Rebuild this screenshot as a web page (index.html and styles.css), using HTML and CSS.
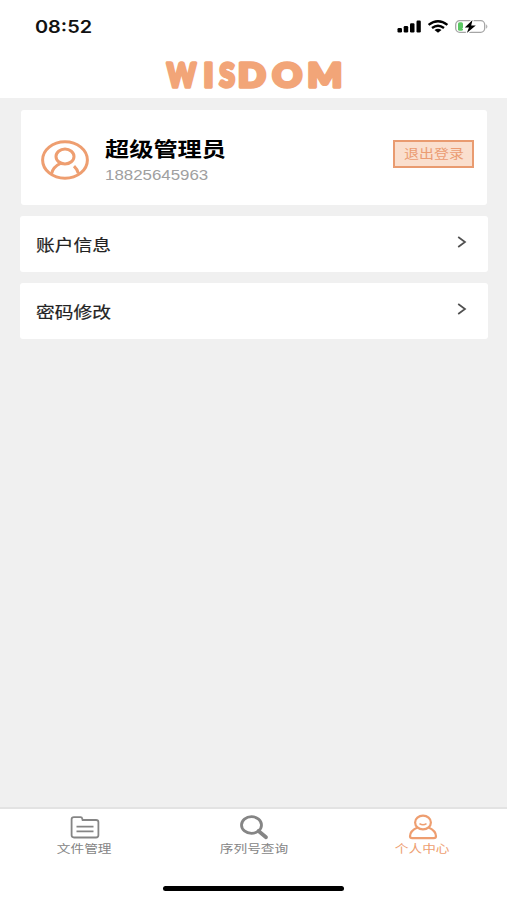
FILE: index.html
```html
<!DOCTYPE html>
<html lang="zh-CN">
<head>
<meta charset="utf-8">
<title>个人中心</title>
<link rel="stylesheet" href="styles.css">
</head>
<body>
<div class="app">
  <header class="header">
    <div class="status">
      <span class="time wide">08:52</span>
      <svg class="signals" width="92" height="16" viewBox="0 0 92 16">
        <g fill="#000">
          <rect x="0.5" y="9" width="4.5" height="4.5" rx="1.2"/>
          <rect x="6.7" y="7" width="4.5" height="6.5" rx="1.2"/>
          <rect x="13" y="4.2" width="4.5" height="9.3" rx="1.2"/>
          <rect x="19.5" y="1.5" width="4.3" height="12" rx="1.2"/>
        </g>
        <g fill="none" stroke="#000" stroke-width="2.4">
          <path d="M31.6 5.9Q41 -1.3 50.4 5.9"/>
          <path d="M35 9Q41 4.4 47 9"/>
        </g>
        <path d="M37.5 11Q41 8.5 44.5 11L41 13.8Z" fill="#000"/>
        <rect x="58.7" y="1.7" width="29" height="11.6" rx="4" fill="none" stroke="#a5a5a5" stroke-width="1.3"/>
        <path d="M89.2 5.2Q91.6 7.5 89.2 9.8Z" fill="#a5a5a5"/>
        <rect x="61" y="3.2" width="5" height="8.6" rx="1.6" fill="#5ac763"/>
        <path d="M75.5 1L67.8 8.5H72L69.8 14L78.8 6.4H74.2Z" fill="#000" stroke="#fff" stroke-width="2.4" paint-order="stroke"/>
      </svg>
    </div>
    <svg class="logo" width="190" height="46" viewBox="0 0 190 46">
      <text transform="translate(8 34.5) scale(.83 1)">W</text>
      <text transform="translate(44.5 34.5)">I</text>
      <text transform="translate(60.5 34.5) scale(.84 1)">S</text>
      <text transform="translate(79 34.5) scale(1.1 1)">D</text>
      <text transform="translate(113.5 34.5) scale(1.1 1)">O</text>
      <text transform="translate(148.5 34.5) scale(1.1 1)">M</text>
    </svg>
  </header>
  <main class="content">
    <section class="card profile">
      <svg class="avatar" width="48" height="40" viewBox="0 0 48 40" fill="none" stroke="#ee9e70" stroke-width="3">
        <ellipse cx="24" cy="20" rx="22.4" ry="18.3"/>
        <ellipse cx="24" cy="16.5" rx="9" ry="7.4" />
        <path d="M10.5 34C11.5 28 15.5 25.3 19.5 23.4M33 26.2Q36.5 29.5 37.4 33.5"/>
      </svg>
      <div class="who">
        <div class="name wide">超级管理员</div>
        <div class="phone wide">18825645963</div>
      </div>
      <button class="logout"><span class="wide">退出登录</span></button>
    </section>
    <a class="card row"><span class="wide">账户信息</span>
      <svg class="arrow" width="10" height="12" viewBox="0 0 10 12"><path d="M1.2 1L8 6L1.2 11"/></svg></a>
    <a class="card row"><span class="wide">密码修改</span>
      <svg class="arrow" width="10" height="12" viewBox="0 0 10 12"><path d="M1.2 1L8 6L1.2 11"/></svg></a>
  </main>
  <footer class="footer">
    <nav class="tabs">
      <a class="tab">
        <svg width="30" height="26" viewBox="0 0 30 26" fill="none" stroke="currentColor" stroke-width="1.8">
          <path d="M4 3.2H10.5Q12 3.2 12.3 4.7L12.6 6H26Q28.4 6 28.4 8V21.3Q28.4 23.5 26 23.5H4Q1.6 23.5 1.6 21.3V5.3Q1.6 3.2 4 3.2Z"/>
          <path d="M6.5 12.6H23.5M6.5 17.4H23.5"/>
        </svg>
        <span class="wide">文件管理</span>
      </a>
      <a class="tab">
        <svg width="30" height="26" viewBox="0 0 30 26" fill="none" stroke="currentColor" stroke-width="2.8">
          <ellipse cx="12.5" cy="11" rx="10" ry="8.3"/>
          <path d="M19.5 17L27 23.2" stroke-width="3.8" stroke-linecap="round"/>
        </svg>
        <span class="wide">序列号查询</span>
      </a>
      <a class="tab active">
        <svg width="30" height="26" viewBox="0 0 30 26" fill="none" stroke="currentColor" stroke-width="2.2">
          <ellipse cx="15" cy="8.5" rx="7.9" ry="6.8"/>
          <path d="M9.5 13.4C4.5 15.5 2 19.2 2 22.3Q2 24.2 4.2 24.2H25.8Q28 24.2 28 22.3C28 19.2 25.5 15.5 20.5 13.4"/>
          <path d="M11.5 9.6Q15 12 18.5 9.6" stroke-width="1.5"/>
        </svg>
        <span class="wide">个人中心</span>
      </a>
    </nav>
    <div class="home-bar"></div>
  </footer>
</div>
</body>
</html>
```

FILE: styles.css
```css
* { box-sizing: border-box; }
body {
  margin: 0;
  background: #f0f0f0;
  font-family: "Liberation Sans", "Noto Sans CJK SC", sans-serif;
}
.app { height: 900px; display: flex; flex-direction: column; overflow: hidden; }
.wide { display: block; white-space: nowrap; transform: scaleX(1.18); transform-origin: left center; }
.header { height: 98px; background: #fff; }
.status {
  height: 52px;
  padding: 1px 18px 0 35px;
  display: flex;
  justify-content: space-between;
  align-items: center;
}
.time { font: 600 17px/20px Inter, sans-serif; color: #111; transform: scaleX(1.17); }
.logo { display: block; margin: 0 auto; overflow: visible; }
.logo text {
  font: 900 33px Lato, sans-serif;
  fill: #f2a578;
  stroke: #f2a578;
  stroke-width: 3.6px;
  stroke-linejoin: round;
}
.content { flex: 1; padding: 11.5px 19px 0 20px; }
.card { display: flex; background: #fff; border-radius: 3px; }
.profile { height: 95px; margin: 0 1px 11px; padding: 0 13px 0 20px; }
.avatar { margin-top: 30px; }
.who { flex: 1; margin: 26px 0 0 16px; }
.name { font-size: 20px; line-height: 28px; font-weight: 700; color: #000; transform: scaleX(1.21); }
.phone { font-size: 15px; line-height: 20px; color: #a0a0a0; margin-top: 1px; transform: scaleX(1.125); }
.logout {
  width: 81px;
  height: 28px;
  margin-top: 30px;
  padding: 0 0 1px 9px;
  border: 2px solid #e99b70;
  background: #fadfce;
  color: #eb9c72;
  font: 12.7px/22px "Noto Sans CJK SC", sans-serif;
  text-align: left;
}
.row {
  height: 56px;
  margin-bottom: 11px;
  padding: 0 21px 0 16px;
  justify-content: space-between;
  align-items: center;
  font-size: 16px;
  color: #222;
  -webkit-text-stroke: 0.2px #222;
}
.row .wide { transform: scaleX(1.17); }
.arrow { fill: none; stroke: #505050; stroke-width: 1.7; margin-top: -3px; }
.footer { height: 93px; background: #fff; border-top: 2px solid #e3e3e3; }
.tabs { display: flex; height: 70px; }
.tab {
  flex: 1;
  padding-top: 5px;
  display: flex;
  flex-direction: column;
  align-items: center;
  color: #858585;
  font-size: 11.6px;
  line-height: 18px;
}
.tab .wide { transform-origin: center; }
.tab.active { color: #ee9e70; }
.home-bar { width: 181px; height: 5px; margin: 7px auto 0; border-radius: 3px; background: #000; }
```
